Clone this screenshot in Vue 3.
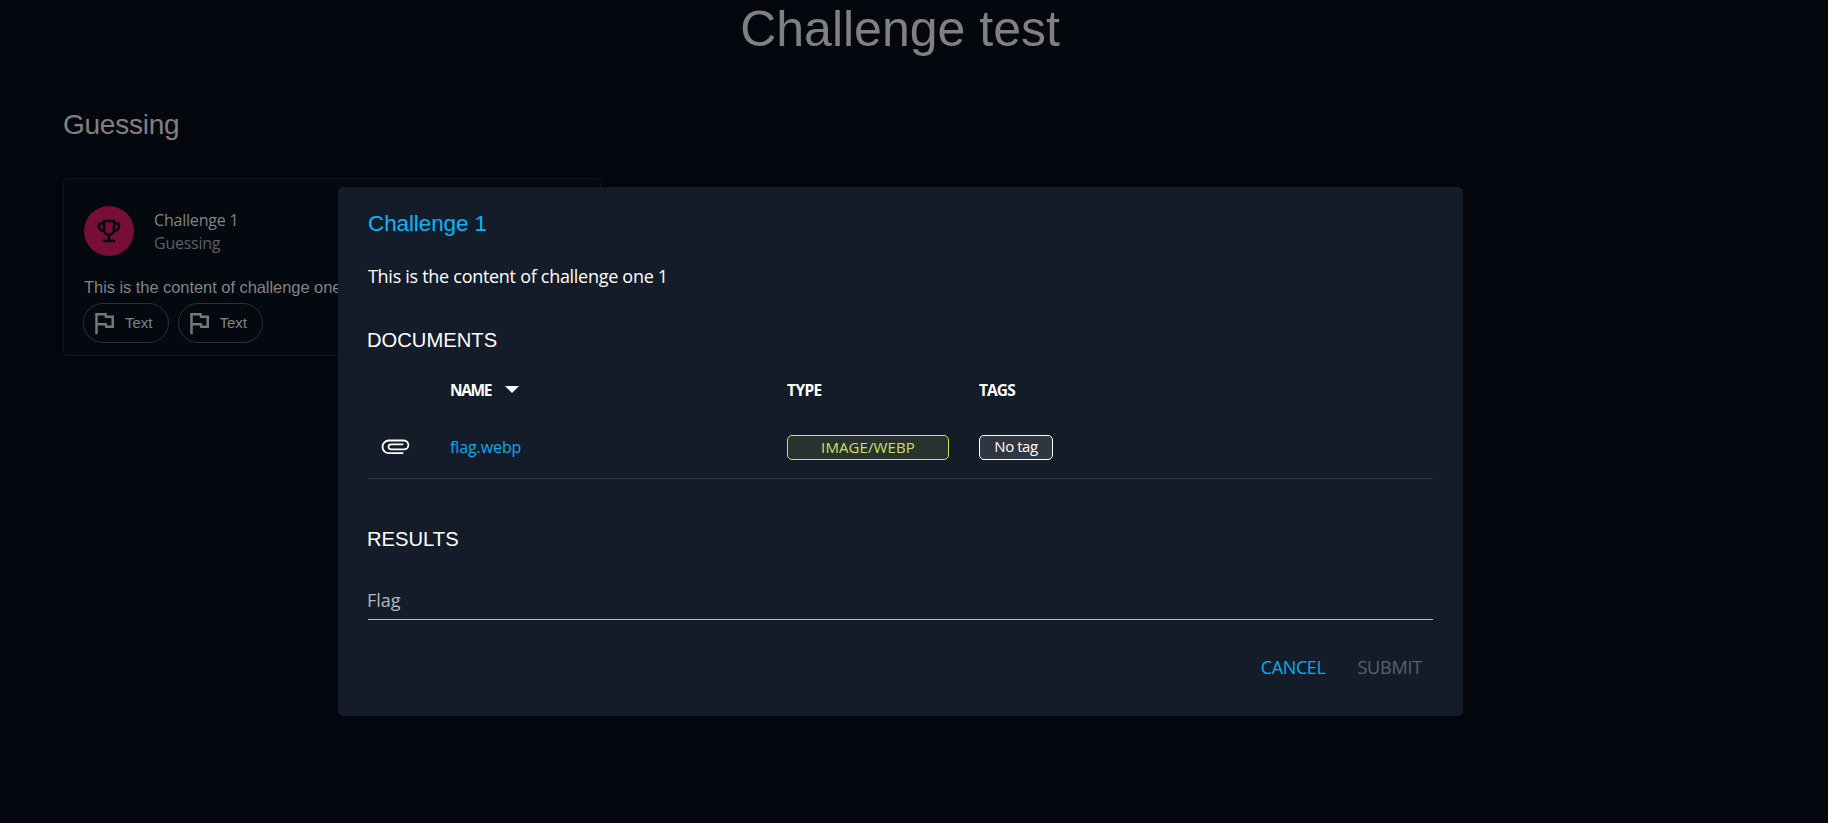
<script setup>
const flags = ['Text', 'Text']
</script>

<template>
  <div class="page">
    <main class="main">
      <h1 class="title"><span>Challenge test</span></h1>
      <h2 class="category"><span>Guessing</span></h2>
      <section class="card">
        <header class="card-head">
          <div class="avatar">
            <svg viewBox="0 0 24 24" width="30" height="30" fill="#04080f">
              <path d="M19 5h-2V3H7v2H5c-1.100 0-2 .9-2 2v1c0 2.550 1.920 4.630 4.390 4.940.63 1.500 1.980 2.630 3.610 2.960V19H7v2h10v-2h-4v-3.100c1.630-.33 2.980-1.460 3.610-2.960C19.080 12.630 21 10.550 21 8V7c0-1.100-.9-2-2-2zM5 8V7h2v3.820C5.840 10.400 5 9.300 5 8zm7 6c-1.650 0-3-1.350-3-3V5h6v6c0 1.650-1.350 3-3 3zm7-6c0 1.300-.84 2.400-2 2.820V7h2v1z" />
            </svg>
          </div>
          <div>
            <div class="card-name"><span>Challenge 1</span></div>
            <div class="card-sub"><span>Guessing</span></div>
          </div>
        </header>
        <p class="card-text"><span>This is the content of challenge one 1</span></p>
        <div class="chips">
          <div v-for="(flag, i) in flags" :key="i" class="chip">
            <svg viewBox="0 0 24 24" width="30" height="30" fill="#757779">
              <path d="M12.360 6l.4 2H18v6h-3.360l-.4-2H7V6h5.360M14 4H5v17h2v-7h5.600l.4 2h7V6h-5.600L14 4z" />
            </svg>
            <span>{{ flag }}</span>
          </div>
        </div>
      </section>
    </main>

    <div class="dialog" role="dialog">
      <h2 class="dialog-title"><span>Challenge 1</span></h2>
      <p class="dialog-text"><span>This is the content of challenge one 1</span></p>
      <h3 class="section"><span>DOCUMENTS</span></h3>
      <div class="row head">
        <div></div>
        <div class="name-head">
          <span class="h-name">NAME</span>
          <svg viewBox="0 0 14 7" width="14" height="7" fill="#fff"><path d="M0 0h14L7 7z" /></svg>
        </div>
        <div><span class="h-type">TYPE</span></div>
        <div><span class="h-tags">TAGS</span></div>
      </div>
      <div class="row item">
        <div class="clip">
          <svg viewBox="0 0 29 16" width="29" height="16" fill="none" stroke="#fff" stroke-width="1.800">
            <path d="M22.300 14.200H7.850a6.350 6.350 0 0 1 0-12.700H23a4.400 4.400 0 0 1 0 8.800H10a2.500 2.500 0 0 1 0-5H22.300" />
          </svg>
        </div>
        <div class="file"><span>flag.webp</span></div>
        <div><div class="tag mime"><span>IMAGE/WEBP</span></div></div>
        <div><div class="tag none"><span>No tag</span></div></div>
      </div>
      <h3 class="section results"><span>RESULTS</span></h3>
      <div class="field"><span>Flag</span></div>
      <div class="actions">
        <span class="cancel">CANCEL</span>
        <span class="submit">SUBMIT</span>
      </div>
    </div>
  </div>
</template>

<style>
body {
  margin: 0;
  background: #03060c;
}
</style>

<style scoped>
.page {
  position: relative;
  height: 823px;
  overflow: hidden;
  background: #03060c;
  color: #fff;
  font-family: "Open Sans", sans-serif;
  box-sizing: border-box;
}
.page * { box-sizing: border-box; }
h1, h2, h3, p { margin: 0; font-weight: 400; white-space: nowrap; }
svg { display: block; flex: none; }

.main { padding: 0 28px 0 63px; color: #828385; }
.title {
  height: 58px;
  font: 400 50px/58px "Liberation Sans", sans-serif;
  text-align: center;
  color: #808080;
  padding-right: 63px;
}
.category {
  margin-top: 50px;
  height: 34px;
  font: 400 28px/34px "Liberation Sans", sans-serif;
  letter-spacing: -0.25px;
  color: #808080;
}
.card {
  width: 538px;
  height: 178px;
  margin-top: 36px;
  padding: 27px 19px 0 20px;
  background: #04080f;
  border: 1px solid #12161d;
  border-radius: 5px;
}
.card-head { display: flex; height: 50px; gap: 20px; }
.avatar {
  width: 50px;
  height: 50px;
  border-radius: 50%;
  background: #780d35;
  display: flex;
  align-items: center;
  justify-content: center;
}
.card-name, .card-sub { font-size: 16px; line-height: 23px; height: 23px; }
.card-name { margin-top: 3px; letter-spacing: -0.2px; }
.card-sub { color: #5c5e62; letter-spacing: -0.25px; }
.card-text {
  height: 24px;
  margin-top: 19px;
  font: 400 16.500px/24px "Liberation Sans", sans-serif;
  letter-spacing: -0.06px;
}
.chips { display: flex; gap: 9px; margin: 4px 0 0 -1px; }
.chip {
  display: flex;
  align-items: center;
  width: 85.500px;
  height: 40px;
  padding-left: 5px;
  gap: 6px;
  border: 1px solid #2c2f34;
  border-radius: 20px;
  font: 400 15px/20px "Liberation Sans", sans-serif;
}

.dialog {
  position: absolute;
  left: 338px;
  top: 187px;
  width: 1125px;
  height: 529px;
  padding: 20px 30px;
  border-radius: 5px;
  background: #151c29;
}
.dialog-title {
  height: 34px;
  font: 400 22.500px/34px "Liberation Sans", sans-serif;
  letter-spacing: -0.1px;
  color: #00b8fa;
}
.dialog-text {
  margin-top: 22px;
  height: 27px;
  font-size: 18px;
  line-height: 26px;
  letter-spacing: -0.29px;
}
.section {
  margin: 38px 0 0 -1px;
  height: 24px;
  font: 400 20.200px/24px "Liberation Sans", sans-serif;
}
.row {
  display: grid;
  grid-template-columns: 82px 337px 192px 1fr;
  align-items: center;
}
.head { height: 50px; margin-top: 12px; padding-top: 2px; font-size: 15.500px; font-weight: 700; }
.name-head { display: flex; align-items: center; gap: 14px; }
.name-head svg { margin-top: -2px; }
.h-name { letter-spacing: -1.400px; }
.h-type { letter-spacing: -0.600px; }
.h-tags { letter-spacing: -0.900px; }
.item { height: 65px; padding-top: 2px; border-bottom: 1px solid #313742; }
.clip { padding-left: 13px; }
.file { color: #00aeef; font-size: 16px; letter-spacing: -0.1px; }
.tag {
  height: 25px;
  border: 1px solid;
  border-radius: 5px;
  display: flex;
  align-items: center;
  justify-content: center;
  font-size: 15px;
  line-height: 21px;
}
.mime { width: 162px; color: #c5e35b; background: #29322f; letter-spacing: 0.1px; }
.none { width: 74px; background: #2f3541; letter-spacing: -0.45px; padding-bottom: 2px; border-color: #fff; }
.results { margin-top: 48px; }
.field {
  margin-top: 17px;
  height: 52px;
  border-bottom: 1px solid #b9bbbf;
  color: #b4b6ba;
  font-size: 18px;
  line-height: 26px;
  padding-top: 19px;
}
.field span { margin-left: -1px; }
.actions {
  display: flex;
  justify-content: flex-end;
  gap: 32px;
  margin-top: 34px;
  padding-right: 11px;
  font-size: 18px;
  line-height: 26px;
}
.cancel { color: #00aeef; letter-spacing: -0.400px; }
.submit { color: #5b6069; letter-spacing: -0.200px; }
</style>
